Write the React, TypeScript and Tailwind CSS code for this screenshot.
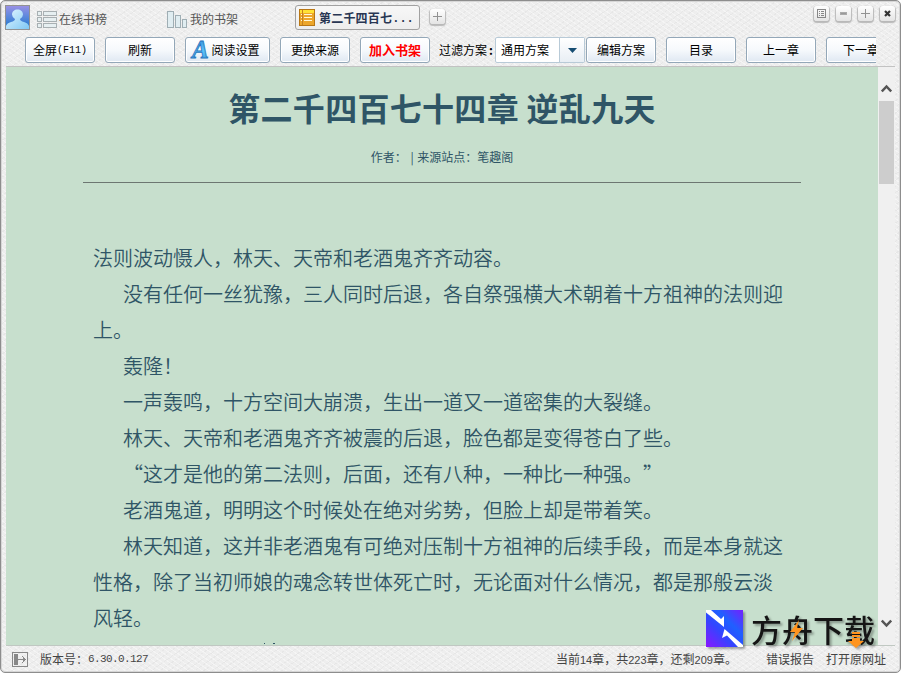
import type { ReactNode } from 'react';
import clsx from 'clsx';

const LINES = [
  { text: '法则波动慑人，林天、天帝和老酒鬼齐齐动容。' },
  { text: '没有任何一丝犹豫，三人同时后退，各自祭强横大术朝着十方祖神的法则迎', indent: true },
  { text: '上。' },
  { text: '轰隆！', indent: true },
  { text: '一声轰鸣，十方空间大崩溃，生出一道又一道密集的大裂缝。', indent: true },
  { text: '林天、天帝和老酒鬼齐齐被震的后退，脸色都是变得苍白了些。', indent: true },
  { text: '“这才是他的第二法则，后面，还有八种，一种比一种强。”', indent: true },
  { text: '老酒鬼道，明明这个时候处在绝对劣势，但脸上却是带着笑。', indent: true },
  { text: '林天知道，这并非老酒鬼有可绝对压制十方祖神的后续手段，而是本身就这', indent: true },
  { text: '性格，除了当初师娘的魂念转世体死亡时，无论面对什么情况，都是那般云淡' },
  { text: '风轻。' },
];

function ToolButton({ children, className }: { children: ReactNode; className?: string }) {
  return (
    <button
      className={clsx(
        'flex h-[26px] shrink-0 items-center justify-center whitespace-nowrap rounded-[3px] border border-[#93a7b8] bg-linear-to-b from-white via-[#f6f9fc] to-[#dfe8f2] text-black shadow-[inset_0_0_0_1px_#fff]',
        className ?? 'w-[70px]',
      )}
    >
      {children}
    </button>
  );
}

function WindowButton({ children }: { children: ReactNode }) {
  return (
    <button className="flex size-[15px] items-center justify-center rounded-[3px] bg-linear-to-b from-white to-[#e4e4e4] shadow-[0_1px_1px_1px_#b9b9b9]">
      {children}
    </button>
  );
}

function PlusIcon() {
  return (
    <svg width="9" height="9" shapeRendering="crispEdges">
      <path d="M4 0h1v4h4v1h-4v4h-1v-4h-4v-1h4z" fill="#929292" />
    </svg>
  );
}

function Avatar() {
  return (
    <svg width="25" height="25" className="shrink-0">
      <defs>
        <linearGradient id="sky" x2="0" y2="1">
          <stop stopColor="#9b91e5" />
          <stop offset=".5" stopColor="#5787dc" />
          <stop offset="1" stopColor="#1875c8" />
        </linearGradient>
        <linearGradient id="person" x2="1" y2="1">
          <stop stopColor="#e2f5ff" />
          <stop offset="1" stopColor="#7fc8f4" />
        </linearGradient>
      </defs>
      <rect x=".5" y=".5" width="24" height="24" fill="url(#sky)" stroke="#929292" />
      <path d="M1 24v-3q1-3 5-4 4-1 4-3-3-2-3-4.500c0-3 2.500-5 5.500-5s5.500 2 5.500 5q0 2.500-3 4.500 0 2 4 3 4 1 5 4v3z" fill="url(#person)" />
    </svg>
  );
}

function ListIcon() {
  return (
    <svg width="20" height="17" fill="#e6eff1" stroke="#a8b0b3" shapeRendering="crispEdges">
      {[0, 6, 12].map((y) => (
        <g key={y}>
          <rect x=".5" y={y + 0.5} width="4" height="4" />
          <rect x="6.500" y={y + 0.5} width="13" height="4" />
        </g>
      ))}
    </svg>
  );
}

function ShelfIcon() {
  return (
    <svg width="20" height="17" fill="#e0edf1" stroke="#9faeb4">
      <rect x=".5" y=".5" width="6" height="16" />
      <rect x="8.500" y="4.500" width="5" height="12" />
      <rect x="15.500" y="8.500" width="4" height="8" />
    </svg>
  );
}

function BookIcon() {
  return (
    <svg width="16" height="17" shapeRendering="crispEdges">
      <rect x=".5" y=".5" width="15" height="16" fill="#eca62b" stroke="#b87615" />
      <path d="M1 1h14v3H1z" fill="#ffe234" />
      <path d="M3 1h1v15H3z" fill="#c68020" />
      <path d="M5 5h8M5 8h8M5 11h8M2 5h1M2 8h1M2 11h1" stroke="#fff7d8" transform="translate(0 .5)" />
    </svg>
  );
}

function LetterIcon() {
  return (
    <svg width="20" height="24" className="shrink-0 overflow-visible">
      <defs>
        <linearGradient id="letter" x2="0" y2="1">
          <stop stopColor="#2f83d6" />
          <stop offset=".55" stopColor="#5cc4f8" />
          <stop offset="1" stopColor="#3a96e0" />
        </linearGradient>
      </defs>
      <text
        x="2"
        y="20"
        fill="url(#letter)"
        stroke="#2875bd"
        strokeWidth=".8"
        className="font-['Liberation_Serif',serif] text-[25px] font-bold italic"
      >
        A
      </text>
    </svg>
  );
}

function TitleBar() {
  return (
    <header className="flex h-[35px] pl-1 pt-1 text-[#555]">
      <Avatar />
      <div className="ml-[7px] flex h-[28px] w-[130px] items-center gap-[2px]">
        <ListIcon />
        <span>在线书榜</span>
      </div>
      <div className="flex h-[28px] w-[128px] items-center gap-[3px]">
        <ShelfIcon />
        <span>我的书架</span>
      </div>
      <div className="flex h-[25px] w-[125px] items-center rounded-[3px] border border-[#a1a1a1] bg-linear-to-b from-[#f7f7f7] to-[#ededed] pl-[3px] font-bold text-[#283653]">
        <BookIcon />
        <span className="ml-[4px] whitespace-nowrap tracking-[0.2px]">第二千四百七</span>
        <span className="pt-[3px] font-['Liberation_Mono',monospace] text-[12px] leading-none">...</span>
      </div>
      <div className="ml-[10px] mt-1">
        <WindowButton>
          <PlusIcon />
        </WindowButton>
      </div>
      <div className="ml-auto mr-[5px] mt-px flex gap-[7px]">
        <WindowButton>
          <svg width="9" height="9" fill="none" stroke="#888" shapeRendering="crispEdges">
            <rect x=".5" y=".5" width="8" height="8" />
            <path d="M2 2.500h1M4 2.500h3M2 4.500h1M4 4.500h3M2 6.500h1M4 6.500h3" />
          </svg>
        </WindowButton>
        <WindowButton>
          <span className="h-[3px] w-[7px] border border-[#aaa] bg-[#999]" />
        </WindowButton>
        <WindowButton>
          <PlusIcon />
        </WindowButton>
        <WindowButton>
          <svg width="7" height="7" stroke="#333" strokeWidth="2.200">
            <path d="m1 1 5 5m0-5-5 5" />
          </svg>
        </WindowButton>
      </div>
    </header>
  );
}

function Toolbar() {
  return (
    <nav className="ml-6 flex h-[30px] w-[851px] items-start overflow-hidden pt-px text-black">
      <div className="flex shrink-0 gap-[10px]">
        <ToolButton>
          全屏<span className="font-['Liberation_Mono',monospace] text-[10px]">(F11)</span>
        </ToolButton>
        <ToolButton>刷新</ToolButton>
        <ToolButton className="w-[85px] pr-[5px]">
          <LetterIcon />
          <span className="ml-[1px]">阅读设置</span>
        </ToolButton>
        <ToolButton>更换来源</ToolButton>
        <ToolButton>
          <span className="text-[13px] font-bold text-[#f00]">加入书架</span>
        </ToolButton>
      </div>
      <span className="ml-[9px] flex h-[26px] w-[56px] shrink-0 items-center whitespace-nowrap">
        过滤方案<b className="ml-[2px]">:</b>
      </span>
      <div className="mr-px flex h-[26px] w-[90px] shrink-0 items-center rounded-[2px] border border-[#b8cad7] bg-white">
        <span className="w-[63px] pl-[5px]">通用方案</span>
        <span className="flex h-full flex-1 items-center justify-center border-l border-[#b8cad7] bg-linear-to-b from-white to-[#e8eef4]">
          <svg width="9" height="5" fill="#164d72">
            <path d="M0 0h9L4.500 5z" />
          </svg>
        </span>
      </div>
      <div className="flex shrink-0 gap-[10px]">
        <ToolButton>编辑方案</ToolButton>
        <ToolButton>目录</ToolButton>
        <ToolButton>上一章</ToolButton>
        <ToolButton>下一章</ToolButton>
      </div>
    </nav>
  );
}

function Chevron({ down }: { down?: boolean }) {
  return (
    <svg width="11" height="9" fill="none" stroke="#555" strokeWidth="2.500" className={down ? 'rotate-180' : ''}>
      <path d="m.8 7.500 4.700-5 4.700 5" />
    </svg>
  );
}

function Reader() {
  return (
    <main className="mx-[5px] flex h-[580px] border-y border-t-[#c2c2c2] border-b-[#c0c8c2]">
      <article className="flex w-[872px] flex-col overflow-hidden bg-[#c7dfcd] text-[#2f5566]">
        <h1 className="mt-[16px] whitespace-nowrap text-center text-[32px] font-bold leading-[48px] tracking-[0.3px]">
          第二千四百七十四章 逆乱九天
        </h1>
        <p className="mt-[17px] h-[20px] whitespace-pre text-center leading-[18px] [word-spacing:1px]">
          作者： | 来源站点：笔趣阁
        </p>
        <hr className="mx-[77px] mt-[14px] border-[#6d7772]" />
        <div className="ml-[87px] mt-[57px] text-[20px] font-[350] leading-9 [text-spacing-trim:space-all]">
          {LINES.map((line) => (
            <p key={line.text} className={clsx('whitespace-nowrap', line.indent && 'pl-[30px]')}>
              {line.text}
            </p>
          ))}
          <div className="ml-[171px] mt-[7px] flex gap-[8px]">
            <i className="size-px bg-[#2f5566]" />
            <i className="h-px w-[2px] bg-[#2f5566]" />
          </div>
        </div>
      </article>
      <div className="flex flex-1 flex-col items-center bg-[#f0f0f0] pb-[17px] pt-[17px]">
        <Chevron />
        <div className="mt-[8px] h-[83px] w-[15px] bg-[#cdcdcd]" />
        <div className="mt-auto leading-none">
          <Chevron down />
        </div>
      </div>
    </main>
  );
}

function StatusBar() {
  return (
    <footer className="flex h-[26px] items-center pl-[11px] pr-[14px] text-[#444]">
      <svg width="16" height="15" fill="none" stroke="#888" shapeRendering="crispEdges">
        <rect x=".5" y=".5" width="15" height="14" />
        <path d="M2 2h4v11H2z" fill="#888" stroke="none" />
        <path d="M6 7.500h7M10 4l3 3.500L10 11" />
      </svg>
      <span className="ml-[12px]">版本号：</span>
      <span className="font-['Liberation_Mono',monospace] text-[11px] tracking-[-0.6px]">6.30.0.127</span>
      <span className="ml-auto whitespace-nowrap">
        当前<Count n="14" />章，共<Count n="223" />章，还剩<Count n="209" />章。
      </span>
      <span className="ml-[29px]">错误报告</span>
      <span className="ml-[12px]">打开原网址</span>
    </footer>
  );
}

// 半角数字占半个汉字宽
function Count({ n }: { n: string }) {
  return <span className="font-['Liberation_Sans',sans-serif] text-[11px]">{n}</span>;
}

function Brand() {
  return (
    <div className="absolute left-[705px] top-[609px] flex items-center drop-shadow-[2px_2px_1px_#0005]">
      <svg width="37" height="37">
        <defs>
          <linearGradient id="brand" x1="0" y1="1" x2="1" y2="0">
            <stop stopColor="#8a16ff" />
            <stop offset=".4" stopColor="#3345ff" />
            <stop offset=".65" stopColor="#1f60ff" />
            <stop offset="1" stopColor="#7420ff" />
          </linearGradient>
        </defs>
        <path d="M0 0h37v37H0z" fill="url(#brand)" />
        <path d="M0 0h5l10 9 3-3v11L0 2.500zM18.500 19 37 35v2h-5L21 25.500 16 28z" fill="#fff" />
      </svg>
      <span className="relative ml-[8px] whitespace-nowrap text-[31px] font-medium leading-[35px] text-[#151515]">
        方舟下载
        <svg width="124" height="42" className="absolute left-0 top-0" fill="#ff941f">
          <path d="m48 9-9 12h5l-3 9 11-13h-6z" />
          <path d="M101 21h8v2h-8zM101 24h8v2h-8zM101 27h8v3h4l-8 7-8-7h4z" />
        </svg>
      </span>
    </div>
  );
}

export default function App() {
  return (
    <div
      lang="zh-CN"
      className="relative h-[673px] w-[901px] overflow-hidden rounded-[5px] border border-[#8d8d8d] bg-[#eee] bg-[repeating-linear-gradient(35deg,#ffffff66_0_1px,transparent_1px_4px),repeating-linear-gradient(-35deg,#dedede77_0_1px,transparent_1px_5px)] font-['Noto_Sans_CJK_SC',sans-serif] text-[12px] shadow-[inset_0_0_0_1px_#d6d6d6]"
    >
      <TitleBar />
      <Toolbar />
      <Reader />
      <StatusBar />
      <Brand />
    </div>
  );
}
